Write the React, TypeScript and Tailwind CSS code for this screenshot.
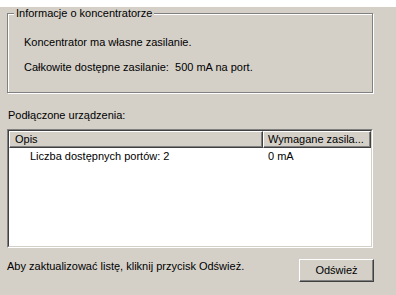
export default function App() {
  return (
    <div
      className="w-[396px] h-[295px] bg-[#d4d0c8] text-black text-[11px] leading-[13px] pl-[7px] pr-[23px]"
      style={{ fontFamily: '"Liberation Sans", Arial, sans-serif' }}
    >
      {/* HUB INFO */}
      <fieldset className="mt-[7px] h-[86px] border border-[#808080] px-[6px] shadow-[1px_1px_0_#ffffff,inset_1px_1px_0_#ffffff]">
        <legend className="px-[2px] bg-[#d4d0c8] leading-[12px]">
          Informacje o koncentratorze
        </legend>
        <div className="pl-[10px] pt-[17px]">
          <p>Koncentrator ma własne zasilanie.</p>
          <p className="mt-[12px] whitespace-pre">Całkowite dostępne zasilanie:  500 mA na port.</p>
        </div>
      </fieldset>

      {/* DEVICES */}
      <p className="mt-[16px] pl-[1px]">Podłączone urządzenia:</p>

      <div className="mt-[7px] h-[119px] border border-t-[#808080] border-l-[#808080] border-r-white border-b-white">
        <div className="h-full border border-t-[#404040] border-l-[#404040] border-r-[#d4d0c8] border-b-[#d4d0c8] bg-white flex flex-col">
          <div className="flex h-[17px] bg-[#d4d0c8]">
            <div className="w-[254px] h-full pl-[5px] border border-t-white border-l-white border-r-[#404040] border-b-[#404040] shadow-[inset_-1px_-1px_0_#808080] flex items-center">
              Opis
            </div>
            <div className="w-[108px] h-full pl-[4px] border border-t-white border-l-white border-r-[#404040] border-b-[#404040] shadow-[inset_-1px_-1px_0_#808080] flex items-center">
              Wymagane zasila...
            </div>
          </div>
          <div className="flex leading-[16px]">
            <div className="w-[254px] pl-[21px]">Liczba dostępnych portów: 2</div>
            <div className="w-[108px] pl-[5px]">0 mA</div>
          </div>
        </div>
      </div>

      {/* FOOTER */}
      <div className="mt-[11px] flex items-start justify-between">
        <p className="mt-[1px]">Aby zaktualizować listę, kliknij przycisk Odśwież.</p>
        <button className="w-[75px] h-[23px] mr-[-1px] bg-[#d4d0c8] border border-t-white border-l-white border-r-[#404040] border-b-[#404040] shadow-[inset_-1px_-1px_0_#808080]">
          Odśwież
        </button>
      </div>
    </div>
  );
}
